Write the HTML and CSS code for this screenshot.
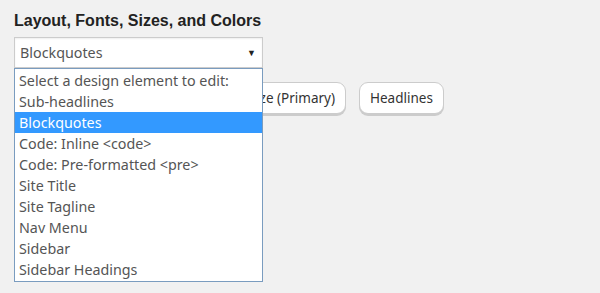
FILE: index.html
```html
<!DOCTYPE html>
<html lang="en">
<head>
  <meta charset="UTF-8" />
  <title>Design Settings</title>
  <link rel="stylesheet" href="styles.css">
</head>
<body>
  <div class="design-panel">
    <h3 class="panel-title">Layout, Fonts, Sizes, and Colors</h3>

    <div class="picker">
      <div class="picker-box">
        <span class="picker-value">Blockquotes</span>
        <span class="picker-arrow">▼</span>
      </div>
      <ul class="picker-list">
        <li>Select a design element to edit:</li>
        <li>Sub-headlines</li>
        <li class="selected">Blockquotes</li>
        <li>Code: Inline &lt;code&gt;</li>
        <li>Code: Pre-formatted &lt;pre&gt;</li>
        <li>Site Title</li>
        <li>Site Tagline</li>
        <li>Nav Menu</li>
        <li>Sidebar</li>
        <li>Sidebar Headings</li>
      </ul>
    </div>

    <div class="quick-buttons">
      <button class="quick-btn">Body Text &amp; Font Size (Primary)</button>
      <button class="quick-btn">Headlines</button>
    </div>
  </div>
</body>
</html>
```

FILE: styles.css
```css
* { box-sizing: border-box; }

html, body {
  height: 100%;
}

body {
  margin: 0;
  background-color: #f1f1f1;
  font-family: "Noto Sans", "Open Sans", sans-serif;
  color: #555;
}

.design-panel {
  min-height: 100%;
  padding: 12px 14px;
}

.panel-title {
  margin: 0 0 7px;
  font-family: "Liberation Sans", Arial, sans-serif;
  font-size: 16px;
  font-weight: bold;
  color: #222;
}

/* Desplegable */
.picker {
  position: relative;
  width: 249px;
}

.picker-box {
  height: 31px;
  background: #fff;
  border: 1px solid #ccc;
  box-shadow: inset 0 1px 2px rgba(0,0,0,0.07);
  display: flex;
  align-items: center;
  justify-content: space-between;
  padding: 0 6px 0 5px;
  font-size: 14.3px;
}

.picker-arrow {
  font-size: 9px;
  color: #222;
}

.picker-list {
  position: absolute;
  top: 31px;
  left: 0;
  width: 249px;
  margin: 0;
  padding: 1px 0;
  list-style: none;
  background: #fff;
  border: 1px solid #7a9cbf;
  z-index: 10;
}

.picker-list li {
  height: 21px;
  line-height: 21px;
  padding: 0 4px;
  font-size: 14.3px;
  white-space: nowrap;
}

.picker-list li.selected {
  background: #3399ff;
  color: #fff;
}

/* Botones */
.quick-buttons {
  display: flex;
  gap: 13px;
  margin-top: 14px;
}

.quick-btn {
  height: 32px;
  padding: 0 10px;
  background: #fff;
  border: 1px solid #ccc;
  border-radius: 9px;
  box-shadow: 0 2px 0 #ccc;
  font-family: "Noto Sans", "Open Sans", sans-serif;
  font-size: 13.5px;
  color: #333;
  cursor: pointer;
}

.quick-btn:first-child {
  width: 332px;
  text-align: right;
}
```
